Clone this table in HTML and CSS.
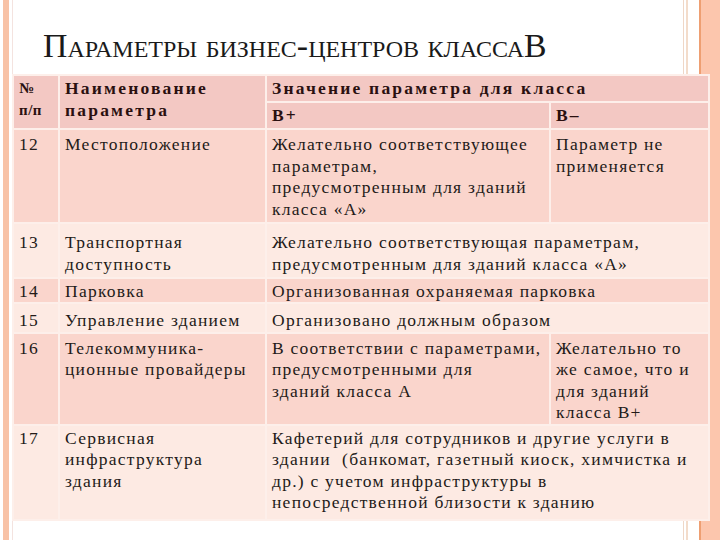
FILE: index.html
```html
<!DOCTYPE html>
<html lang="ru">
<head>
<meta charset="utf-8">
<title>Параметры бизнес-центров класса B</title>
<link rel="stylesheet" href="styles.css">
</head>
<body>
<div class="slide">
  <header class="head">
    <h1 class="title">Параметры бизнес-центров классаB</h1>
  </header>
  <table class="params">
    <colgroup>
      <col class="c1"><col class="c2"><col class="c3"><col class="c4">
    </colgroup>
    <thead>
      <tr class="r-h1">
        <th rowspan="2" class="num">№<br>п/п</th>
        <th rowspan="2">Наименование<br>параметра</th>
        <th colspan="2">Значение параметра для класса</th>
      </tr>
      <tr class="r-h2">
        <th>B+</th>
        <th>B–</th>
      </tr>
    </thead>
    <tbody>
      <tr class="dark r12">
        <td>12</td>
        <td>Местоположение</td>
        <td>Желательно соответствующее<br>параметрам,<br>предусмотренным для зданий<br>класса «А»</td>
        <td>Параметр не<br>применяется</td>
      </tr>
      <tr class="light r13">
        <td>13</td>
        <td>Транспортная<br>доступность</td>
        <td colspan="2">Желательно соответствующая параметрам,<br>предусмотренным для зданий класса «А»</td>
      </tr>
      <tr class="dark r14">
        <td>14</td>
        <td>Парковка</td>
        <td colspan="2">Организованная охраняемая парковка</td>
      </tr>
      <tr class="light r15">
        <td>15</td>
        <td>Управление зданием</td>
        <td colspan="2">Организовано должным образом</td>
      </tr>
      <tr class="dark r16">
        <td>16</td>
        <td>Телекоммуника-<br>ционные провайдеры</td>
        <td>В соответствии с параметрами,<br>предусмотренными для<br>зданий класса А</td>
        <td>Желательно то<br>же самое, что и<br>для зданий<br>класса B+</td>
      </tr>
      <tr class="light r17">
        <td>17</td>
        <td>Сервисная<br>инфраструктура<br>здания</td>
        <td colspan="2">Кафетерий для сотрудников и другие услуги в<br>здании&nbsp; (банкомат, газетный киоск, химчистка и<br>др.) с учетом инфраструктуры в<br>непосредственной близости к зданию</td>
      </tr>
    </tbody>
  </table>
</div>
</body>
</html>
```

FILE: styles.css
```css
html, body {
  margin: 0;
  padding: 0;
}

body {
  width: 720px;
  height: 540px;
  overflow: hidden;
  background:
    linear-gradient(to right,
      #ffffff 0 3px,
      #f8c2a6 3px 9px,
      #ffffff 9px 12px,
      #f4e3df 12px 13px,
      #ffffff 13px 683px,
      #efd7c7 683px 684px,
      #ffffff 684px 686px,
      #f3dccb 686px 688px,
      #ffffff 688px 699px,
      #ee9f72 699px 701px,
      #fcc6ad 701px 720px);
}

.slide {
  width: 720px;
  height: 540px;
}

.head {
  height: 74px;
  box-sizing: border-box;
  padding: 29px 0 0 43px;
}

.title {
  margin: 0;
  font-family: "Liberation Serif", serif;
  font-weight: normal;
  font-size: 33.8px;
  line-height: 33px;
  font-variant: small-caps;
  color: #1a1a1a;
  white-space: nowrap;
}

.params {
  margin-left: 12px;
  width: 696px;
  table-layout: fixed;
  border-collapse: collapse;
  font-family: "Liberation Serif", serif;
  font-size: 17.5px;
  letter-spacing: 1.25px;
  line-height: 21.5px;
  color: #231a18;
}

.c1 { width: 46px; }
.c2 { width: 207px; }
.c3 { width: 284px; }
.c4 { width: 159px; }

.params th,
.params td {
  border: 2px solid #fdefea;
  padding: 3px 3px 0 5px;
  vertical-align: top;
  text-align: left;
  white-space: nowrap;
  overflow: hidden;
}

.params th {
  background: #f3c8c3;
  font-weight: bold;
  font-size: 17.5px;
  letter-spacing: 2.2px;
  color: #2a1010;
}

.params th.num {
  font-size: 15px;
  letter-spacing: 0.5px;
  padding-left: 5px;
  padding-right: 2px;
}

.r-h1 { height: 27px; }
.r-h2 { height: 27px; }
.r-h1 th { padding-top: 2px; }
.r-h2 th { padding-top: 2px; }

.dark td { background: #fad5cc; }
.light td { background: #fdeae3; }

.r12 { height: 94px; }
.r12 td { padding-top: 4px; }
.r13 { height: 55px; }
.r13 td { padding-top: 8px; }
.r14 { height: 24px; }
.r14 td { padding-top: 1.5px; }
.r15 { height: 29px; }
.r15 td { padding-top: 6px; }
.r16 { height: 92px; }
.r16 td { padding-top: 4px; }
.r17 { height: 95px; }
.r17 td { padding-top: 2px; }
```
